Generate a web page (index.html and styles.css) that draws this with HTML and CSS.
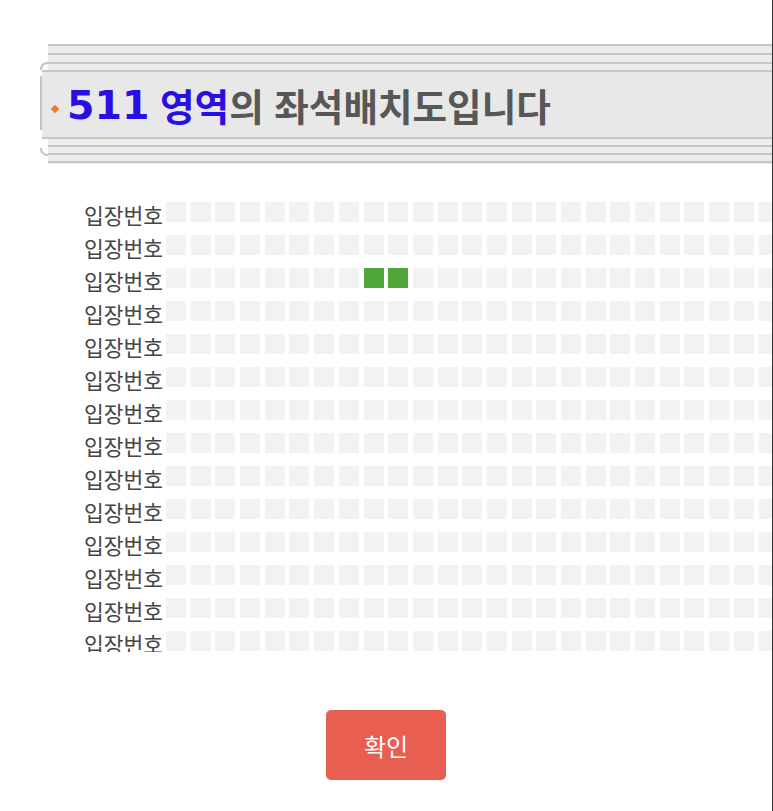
FILE: index.html
```html
<!DOCTYPE html>
<html lang="ko">
<head>
  <meta charset="UTF-8">
  <meta name="viewport" content="width=device-width, initial-scale=1">
  <title>좌석배치도</title>
  <link rel="stylesheet" href="styles.css">
</head>
<body>
  <div class="page">
    <div class="title-box">
      <svg class="bracket" width="12" height="100" viewBox="0 0 12 100">
        <path d="M9 1 Q2 1 2 8" />
        <path d="M2 14 V68" />
        <path d="M2 86 Q2 93 9 93" />
      </svg>
      <div class="stripes stripes-top"></div>
      <h2 class="title">
        <span class="dot"></span>
        <span class="num">511</span>&nbsp;<span class="area">영역</span>의 좌석배치도입니다
      </h2>
      <div class="stripes stripes-bottom"></div>
    </div>

    <div class="seat-map" id="seat-map"></div>

    <div class="actions">
      <button type="button" class="ok-button">확인</button>
    </div>
  </div>

  <script>
  const map = document.getElementById("seat-map");
  const rows = 14;
  const cols = 25;
  // row index -> seat indexes that are taken
  const picked = { 2: [8, 9] };

  for (let r = 0; r < rows; r++) {
    const row = document.createElement("div");
    row.className = "seat-row";

    const label = document.createElement("span");
    label.className = "row-label";
    label.textContent = "입장번호";
    row.appendChild(label);

    for (let c = 0; c < cols; c++) {
      const seat = document.createElement("span");
      seat.className = "seat";
      if (picked[r] && picked[r].includes(c)) {
        seat.classList.add("on");
      }
      row.appendChild(seat);
    }
    map.appendChild(row);
  }
  </script>
</body>
</html>
```

FILE: styles.css
```css
* {
  box-sizing: border-box;
  margin: 0;
  padding: 0;
}

body {
  background: #ffffff;
  font-family: 'Noto Sans CJK KR', 'Noto Sans', sans-serif;
}

.page {
  width: 773px;
  height: 811px;
  border-right: 1px solid #333;
  overflow: hidden;
  padding-top: 44px;
}

/* title box */
.title-box {
  position: relative;
  margin-left: 48px;
}

.bracket {
  position: absolute;
  left: -9px;
  top: 18px;
}

.bracket path {
  fill: none;
  stroke: #c3c3c3;
  stroke-width: 2;
}

.stripes-top {
  height: 26px;
  background: repeating-linear-gradient(to bottom, #c6c6c6 0 2px, #ececec 2px 9px);
}

.stripes-bottom {
  height: 25px;
  background: repeating-linear-gradient(to bottom, #ececec 0 6px, #c6c6c6 6px 8px);
}

.title {
  display: flex;
  align-items: center;
  height: 69px;
  margin-left: -6px;
  padding-left: 10px;
  background: #e8e8e8;
  border-top: 2px solid #c6c6c6;
  border-bottom: 2px solid #c6c6c6;
  font-size: 37.6px;
  font-weight: 700;
  color: #575757;
  white-space: nowrap;
}

.dot {
  width: 6px;
  height: 6px;
  margin-right: 9px;
  margin-top: 8px;
  background: #f07a2a;
  transform: rotate(45deg);
}

.num {
  font-family: 'DejaVu Sans', sans-serif;
  font-size: 39.5px;
  color: #2a0fe3;
}

.area {
  color: #2a0fe3;
}

/* seat map */
.seat-map {
  display: flex;
  flex-direction: column;
  gap: 13px;
  height: 452px;
  margin-top: 36px;
  padding-top: 2px;
  padding-left: 80px;
  overflow: hidden;
}

.seat-row {
  display: flex;
  align-items: center;
  gap: 4.7px;
  height: 20px;
  flex-shrink: 0;
}

.row-label {
  width: 83px;
  margin-top: 6px;
  margin-right: -1.7px;
  text-align: right;
  font-size: 21.5px;
  line-height: 26px;
  color: #454545;
  flex-shrink: 0;
}

.seat {
  width: 20px;
  height: 20px;
  background: #f2f2f2;
  flex-shrink: 0;
}

.seat.on {
  background: #4fa73a;
}

/* button */
.actions {
  display: flex;
  justify-content: center;
  margin-top: 58px;
}

.ok-button {
  width: 120px;
  height: 70px;
  background: #e85f51;
  color: #fff;
  border: none;
  border-radius: 5px;
  font-family: 'Noto Sans CJK KR', sans-serif;
  font-size: 24px;
  cursor: pointer;
}
```
